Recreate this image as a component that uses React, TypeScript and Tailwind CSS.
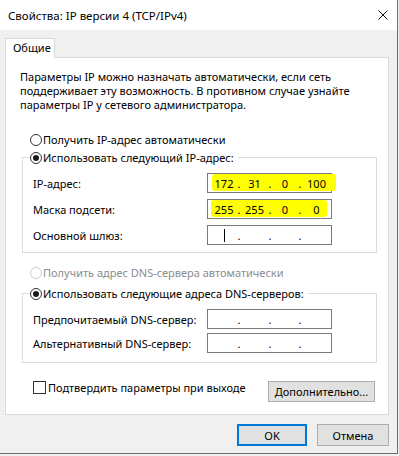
import React from "react";

function Radio({ checked, disabled }: { checked?: boolean; disabled?: boolean }) {
  return (
    <span
      className={`flex items-center justify-center w-[12px] h-[12px] rounded-full border bg-white shrink-0 ${
        disabled ? "border-[#cccccc]" : "border-[#333333]"
      }`}
    >
      {checked && <span className="block w-[6px] h-[6px] rounded-full bg-[#1a1a1a]" />}
    </span>
  );
}

function IpBox({ octets, hl, cursor }: { octets?: string[]; hl?: string; cursor?: boolean }) {
  const o = octets ?? ["", "", "", ""];
  return (
    <div className="relative w-[125px] h-[20px] border border-[#7a7a7a] bg-white flex items-center pl-[4px]">
      {hl && <div className={`absolute rounded-[3px] bg-[#ffff00] ${hl}`} />}
      <span className="relative w-[24px] h-[13px] flex justify-center items-center">
        {cursor ? <span className="block w-[1px] h-[13px] bg-black" /> : o[0]}
      </span>
      <span className="relative w-[6px] text-center">.</span>
      <span className="relative w-[25px] text-center">{o[1]}</span>
      <span className="relative w-[6px] text-center">.</span>
      <span className="relative w-[24px] text-center">{o[2]}</span>
      <span className="relative w-[6px] text-center">.</span>
      <span className="relative w-[27px] text-center">{o[3]}</span>
    </div>
  );
}

function Row({ label, children }: { label: string; children: React.ReactNode }) {
  return (
    <div className="flex items-center h-[20px]">
      <span className="w-[174px]">{label}</span>
      {children}
    </div>
  );
}

export default function App() {
  return (
    <div className="w-[399px] h-[456px] bg-[#f0f0f0] font-['Noto_Sans',sans-serif] text-[11px] leading-[13px] text-black">
      <div className="w-[398px] h-[454px] border-r border-b border-[#6e6e6e] flex flex-col">
        {/* Title bar */}
        <div className="h-[30px] bg-white flex items-center justify-between pl-[8px] pr-[9px] shrink-0">
          <span className="text-[11.5px]">Свойства: IP версии 4 (TCP/IPv4)</span>
          <svg width="10" height="10" viewBox="0 0 10 10" className="block">
            <path d="M0.5 0.5 L9.5 9.5 M9.5 0.5 L0.5 9.5" stroke="#111" strokeWidth="1" fill="none" />
          </svg>
        </div>

        {/* Body */}
        <div className="flex-1 flex flex-col pt-[8px] pl-[5px]">
          <div className="relative z-10 w-[50px] h-[20px] -mb-px bg-white border border-b-0 border-[#d9d9d9] pl-[7px] pt-[2px]">
            Общие
          </div>
          <div className="w-[384px] h-[358px] border border-[#d9d9d9] bg-white flex flex-col">
            <p className="pl-[14px] pt-[12px] leading-[14px]">
              Параметры IP можно назначать автоматически, если сеть
              <br />
              поддерживает эту возможность. В противном случае узнайте
              <br />
              параметры IP у сетевого администратора.
            </p>

            <div className="mt-[21px] ml-[24px] flex items-center gap-[1px] h-[13px]">
              <Radio />
              <span>Получить IP-адрес автоматически</span>
            </div>

            <fieldset className="mt-[5px] ml-[16px] w-[355px] border border-[#dcdcdc] pl-[10px] pb-[7px]">
              <legend className="ml-[-3px] pr-[4px]">
                <span className="flex items-center gap-[1px] h-[13px]">
                  <Radio checked />
                  <span>Использовать следующий IP-адрес:</span>
                </span>
              </legend>
              <div className="mt-[9px] flex flex-col gap-[6px]">
                <Row label="IP-адрес:">
                  <IpBox octets={["172", "31", "0", "100"]} hl="left-[4px] top-0 w-[124px] h-[17px]" />
                </Row>
                <Row label="Маска подсети:">
                  <IpBox octets={["255", "255", "0", "0"]} hl="left-[3px] top-0 w-[116px] h-[17px]" />
                </Row>
                <Row label="Основной шлюз:">
                  <IpBox cursor />
                </Row>
              </div>
            </fieldset>

            <div className="mt-[13px] ml-[24px] flex items-center gap-[1px] h-[13px] text-[#8c8c8c]">
              <Radio disabled />
              <span>Получить адрес DNS-сервера автоматически</span>
            </div>

            <fieldset className="mt-[8px] ml-[16px] w-[355px] border border-[#dcdcdc] pl-[10px] pb-[9px]">
              <legend className="ml-[-3px] pr-[4px]">
                <span className="flex items-center gap-[1px] h-[13px]">
                  <Radio checked />
                  <span>Использовать следующие адреса DNS-серверов:</span>
                </span>
              </legend>
              <div className="mt-[9px] flex flex-col gap-[4px]">
                <Row label="Предпочитаемый DNS-сервер:">
                  <IpBox />
                </Row>
                <Row label="Альтернативный DNS-сервер:">
                  <IpBox />
                </Row>
              </div>
            </fieldset>

            <div className="mt-[18px] ml-[27px] mr-[13px] flex items-start justify-between">
              <div className="flex items-center gap-[2px] h-[13px]">
                <span className="block w-[13px] h-[13px] border border-[#333333] bg-white" />
                <span>Подтвердить параметры при выходе</span>
              </div>
              <button className="w-[107px] h-[21px] bg-[#e1e1e1] border border-[#adadad] flex items-center justify-center">
                Дополнительно...
              </button>
            </div>
          </div>

          <div className="mt-[9px] pr-[8px] flex justify-end gap-[10px]">
            <button className="w-[70px] h-[22px] bg-[#e1e1e1] border-2 border-[#0078d7] flex items-center justify-center">
              OK
            </button>
            <button className="w-[72px] h-[22px] bg-[#e1e1e1] border border-[#adadad] flex items-center justify-center">
              Отмена
            </button>
          </div>
        </div>
      </div>
    </div>
  );
}
